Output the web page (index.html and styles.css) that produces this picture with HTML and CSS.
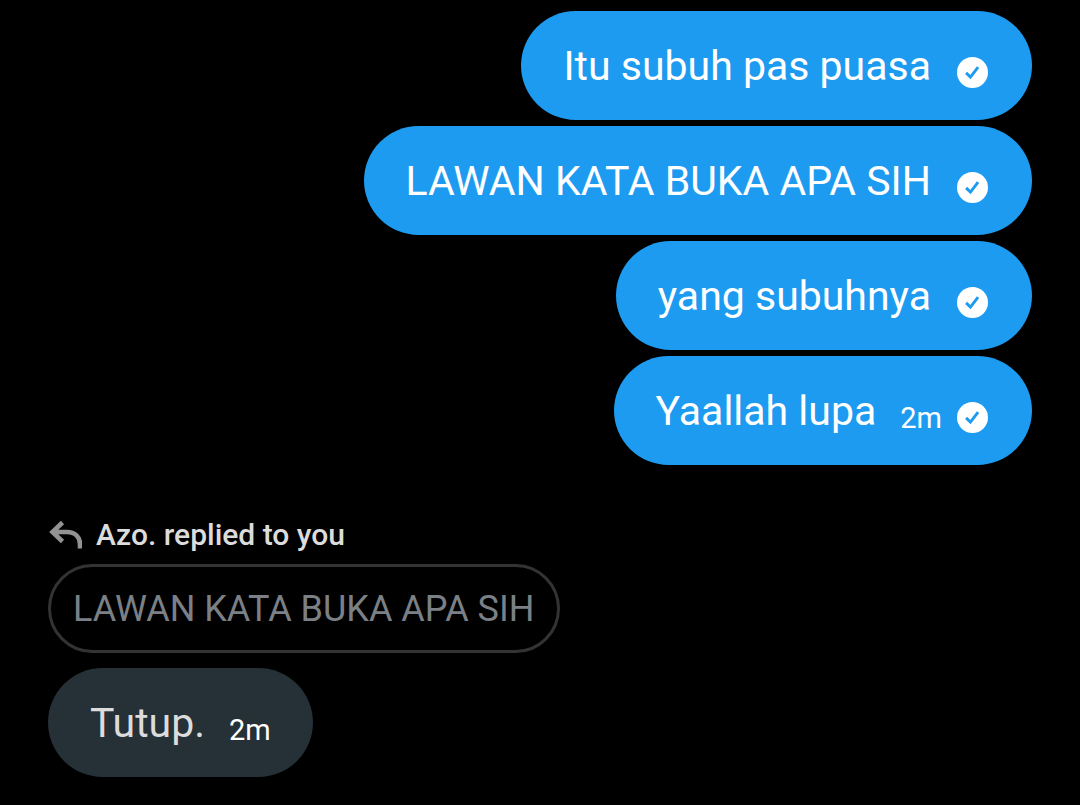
FILE: index.html
```
<!DOCTYPE html>
<html lang="id">
<head>
    <meta charset="UTF-8">
    <meta name="viewport" content="width=device-width, initial-scale=1.0">
    <title>Messages</title>
    <link rel="stylesheet" href="styles.css">
</head>
<body>
<svg class="symbols" aria-hidden="true">
    <symbol id="icon-sent" viewBox="0 0 30 30">
        <circle cx="15" cy="15" r="15" fill="#ffffff"/>
        <path d="M8.800 15.400l4.200 4 7.400-9.600" fill="none" stroke="#1d9bf0" stroke-width="2.800"/>
    </symbol>
</svg>
<main class="chat">
    <div class="group sent">
        <div class="bubble">
            <p class="text">Itu subuh pas puasa</p>
            <svg class="check"><use href="#icon-sent"/></svg>
        </div>
        <div class="bubble">
            <p class="text">LAWAN KATA BUKA APA SIH</p>
            <svg class="check"><use href="#icon-sent"/></svg>
        </div>
        <div class="bubble">
            <p class="text">yang subuhnya</p>
            <svg class="check"><use href="#icon-sent"/></svg>
        </div>
        <div class="bubble timed">
            <p class="text">Yaallah lupa</p>
            <div class="meta">
                <time class="time">2m</time>
                <svg class="check"><use href="#icon-sent"/></svg>
            </div>
        </div>
    </div>

    <div class="group received">
        <div class="reply-label">
            <svg class="reply-icon" viewBox="0 0 34 30">
                <path d="M14.500 2.500L4.500 12l10 9.500M4.500 12h14.500c8 0 13 5 13 12v4.500" fill="none" stroke="#929292" stroke-width="4.600"/>
            </svg>
            <span>Azo. replied to you</span>
        </div>
        <blockquote class="quote">LAWAN KATA BUKA APA SIH</blockquote>
        <div class="bubble timed">
            <p class="text">Tutup.</p>
            <time class="time">2m</time>
        </div>
    </div>
</main>
</body>
</html>
```

FILE: styles.css
```
* {
    box-sizing: border-box;
}

body {
    margin: 0;
    background: #000000;
    color: #ffffff;
    font-family: Roboto, sans-serif;
}

.symbols {
    display: none;
}

.chat {
    display: flex;
    flex-direction: column;
    gap: 52px;
    padding: 11px 48px 28px;
}

.group {
    display: flex;
    flex-direction: column;
}

.sent {
    align-items: flex-end;
    gap: 6px;
}

.received {
    align-items: flex-start;
}

.bubble {
    display: flex;
    align-items: flex-end;
    gap: 26px;
    padding: 31px 44px 30px 42px;
    border-radius: 56px;
}

.timed {
    gap: 24px;
}

.sent .bubble {
    background: #1d9bf0;
}

.received .bubble {
    background: #253037;
    color: #dcdcdc;
    padding-right: 42px;
}

.text {
    margin: 0;
    font-size: 41px;
    line-height: 48px;
}

.meta {
    display: flex;
    align-items: flex-end;
    gap: 15px;
}

.time {
    margin-bottom: 1px;
    font-size: 29px;
    line-height: 32px;
    color: #ffffff;
}

.check {
    display: block;
    flex: none;
    width: 31px;
    height: 31px;
    margin-bottom: 2px;
}

.reply-label {
    display: flex;
    align-items: center;
    gap: 14px;
    margin-bottom: 11px;
    font-size: 30px;
    font-weight: 500;
    line-height: 36px;
    color: #dcdcdc;
}

.reply-icon {
    width: 34px;
    height: 30px;
}

.quote {
    margin: 0 0 15px;
    padding: 20px 23px 19px 22px;
    border: 3px solid #323335;
    border-radius: 45px;
    font-size: 36px;
    line-height: 44px;
    color: #7b8086;
}
```
